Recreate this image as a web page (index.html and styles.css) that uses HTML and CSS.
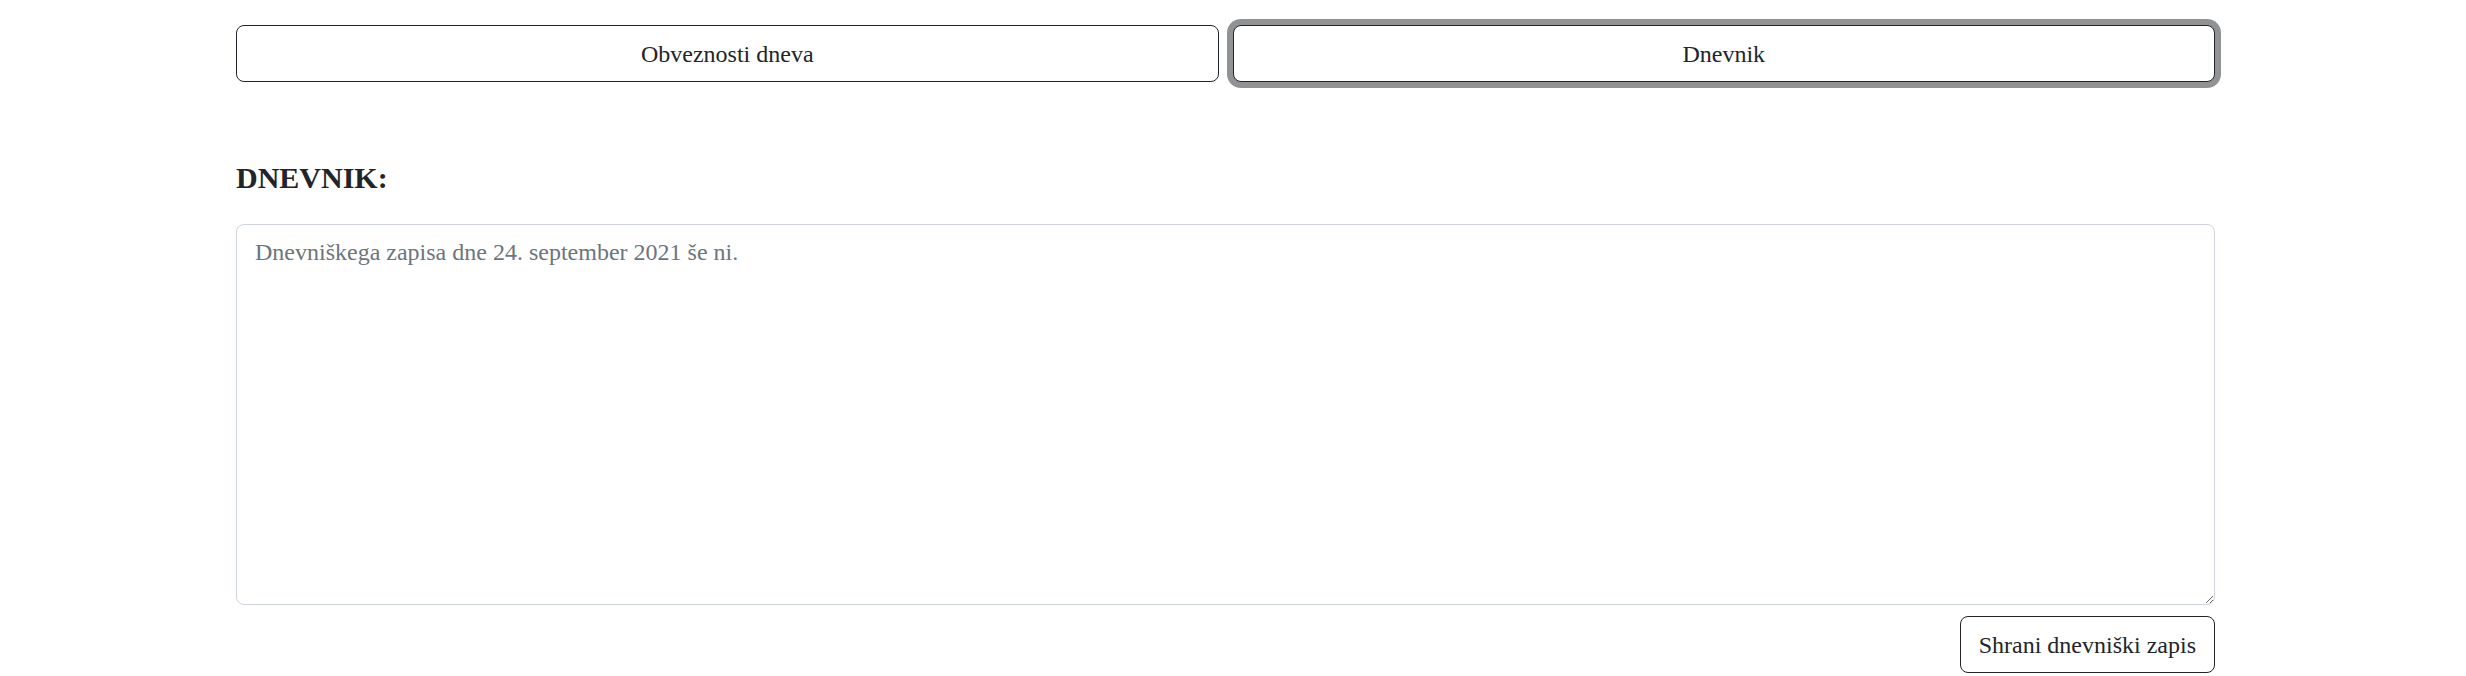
FILE: index.html
```html
<!DOCTYPE html>
<html lang="sl">
<head>
<meta charset="utf-8">
<title>Dnevnik</title>
<link rel="stylesheet" href="styles.css">
</head>
<body>
<main class="page">
  <div class="tabs">
    <button class="tab">Obveznosti dneva</button>
    <button class="tab tab-active">Dnevnik</button>
  </div>
  <h2 class="title">DNEVNIK:</h2>
  <textarea class="entry" placeholder="Dnevniškega zapisa dne 24. september 2021 še ni."></textarea>
  <div class="actions">
    <button class="save">Shrani dnevniški zapis</button>
  </div>
</main>
</body>
</html>
```

FILE: styles.css
```css
html, body {
  margin: 0;
  padding: 0;
  background: #ffffff;
}

body {
  font-family: "Liberation Serif", "Times New Roman", serif;
  color: #212529;
}

.page {
  width: 1979px;
  margin-left: 236px;
  padding-top: 25px;
  display: flex;
  flex-direction: column;
}

.tabs {
  display: flex;
  gap: 14px;
}

.tab {
  flex: 1 1 0;
  height: 57px;
  padding: 0 18px;
  background: #ffffff;
  border: 1px solid #212529;
  border-radius: 8px;
  font-family: "Liberation Serif", "Times New Roman", serif;
  font-size: 24px;
  line-height: 36px;
  color: #212529;
  cursor: pointer;
}

.tab-active {
  box-shadow: 0 0 0 6px rgba(33, 37, 41, 0.5);
}

.title {
  margin: 78px 0 28px 0;
  font-size: 30px;
  line-height: 36px;
  font-weight: bold;
  color: #212529;
}

.entry {
  display: block;
  box-sizing: border-box;
  width: 1979px;
  height: 381px;
  padding: 9px 18px;
  border: 1px solid #ced4da;
  border-radius: 8px;
  font-family: "Liberation Serif", "Times New Roman", serif;
  font-size: 24px;
  line-height: 36px;
  color: #212529;
  resize: vertical;
  outline: none;
}

.entry::placeholder {
  color: #6c757d;
  opacity: 1;
}

.actions {
  display: flex;
  justify-content: flex-end;
  margin-top: 11px;
}

.save {
  height: 57px;
  padding: 0 18px;
  background: #ffffff;
  border: 1px solid #212529;
  border-radius: 8px;
  font-family: "Liberation Serif", "Times New Roman", serif;
  font-size: 24px;
  line-height: 36px;
  color: #212529;
  cursor: pointer;
}
```
